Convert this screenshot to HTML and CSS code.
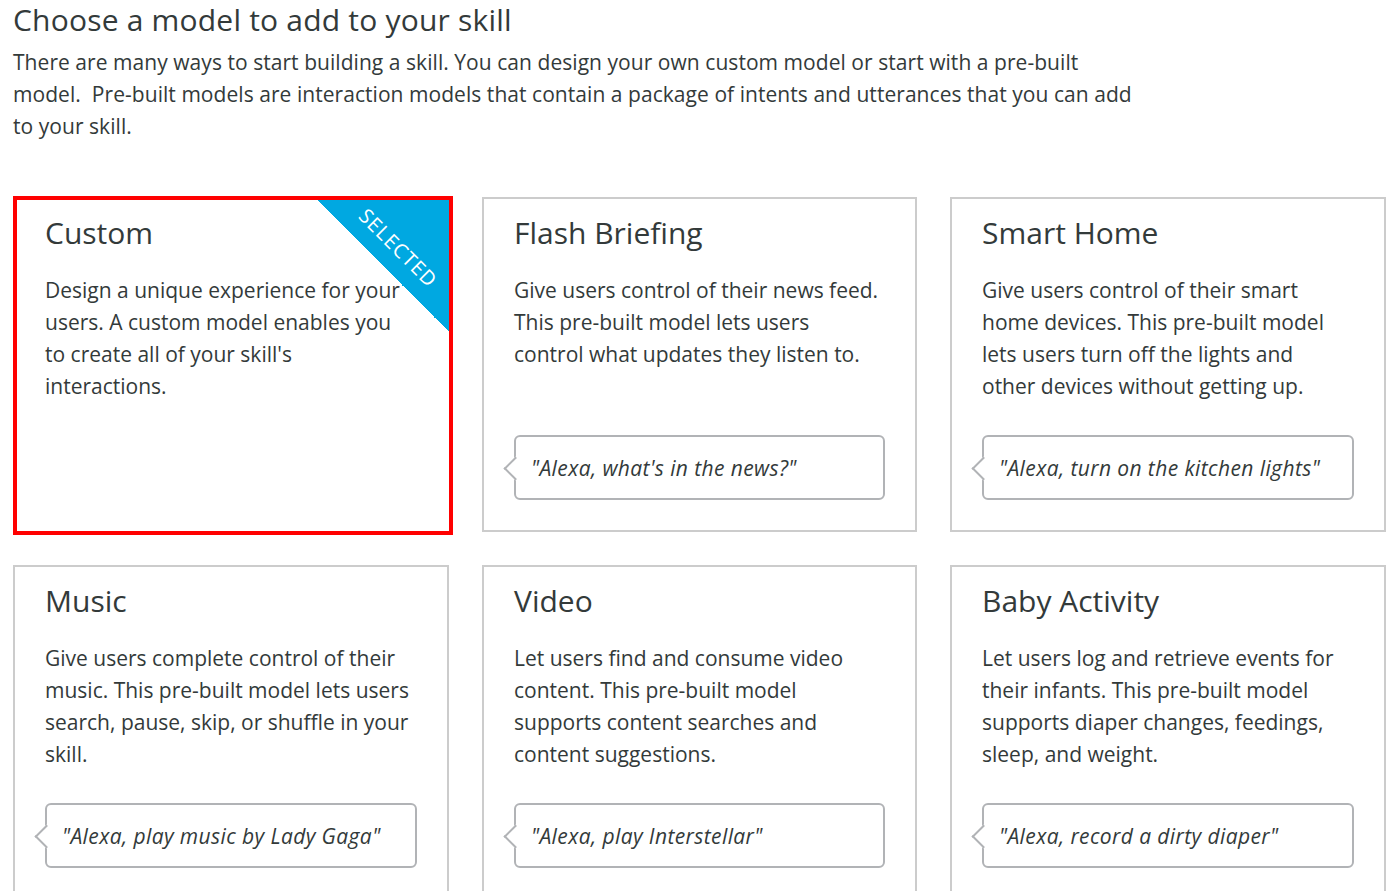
FILE: index.html
```html
<!DOCTYPE html>
<html lang="en">
<head>
<meta charset="utf-8">
<title>Choose a model</title>
<link rel="stylesheet" href="styles.css">
</head>
<body>
<div class="page">
  <h1 class="heading">Choose a model to add to your skill</h1>
  <p class="intro">There are many ways to start building a skill. You can design your own custom model or start with a pre-built<br>model.&nbsp; Pre-built models are interaction models that contain a package of intents and utterances that you can add to your skill.</p>

  <div class="grid">
    <div class="card card-selected">
      <div class="ribbon"><span class="ribbon-text">SELECTED</span></div>
      <h2 class="card-title">Custom</h2>
      <p class="card-desc">Design a unique experience for your users. A custom model enables you to create all of your skill's interactions.</p>
    </div>

    <div class="card">
      <h2 class="card-title">Flash Briefing</h2>
      <p class="card-desc">Give users control of their news feed. This pre-built model lets users control what updates they listen to.</p>
      <div class="bubble"><span class="bubble-text">"Alexa, what's in the news?"</span></div>
    </div>

    <div class="card">
      <h2 class="card-title">Smart Home</h2>
      <p class="card-desc">Give users control of their smart home devices. This pre-built model lets users turn off the lights and other devices without getting up.</p>
      <div class="bubble"><span class="bubble-text">"Alexa, turn on the kitchen lights"</span></div>
    </div>

    <div class="card">
      <h2 class="card-title">Music</h2>
      <p class="card-desc">Give users complete control of their music. This pre-built model lets users search, pause, skip, or shuffle in your skill.</p>
      <div class="bubble"><span class="bubble-text">"Alexa, play music by Lady Gaga"</span></div>
    </div>

    <div class="card">
      <h2 class="card-title">Video</h2>
      <p class="card-desc">Let users find and consume video content. This pre-built model supports content searches and content suggestions.</p>
      <div class="bubble"><span class="bubble-text">"Alexa, play Interstellar"</span></div>
    </div>

    <div class="card">
      <h2 class="card-title">Baby Activity</h2>
      <p class="card-desc">Let users log and retrieve events for their infants. This pre-built model supports diaper changes, feedings, sleep, and weight.</p>
      <div class="bubble"><span class="bubble-text">"Alexa, record a dirty diaper"</span></div>
    </div>
  </div>
</div>
</body>
</html>
```
FILE: styles.css
```css
html, body {
  margin: 0;
  padding: 0;
  background: #ffffff;
}

body {
  font-family: "Open Sans", "Noto Sans", "Liberation Sans", sans-serif;
  color: #333a3a;
  overflow: hidden;
}

.page {
  padding: 0 13px;
}

.heading {
  margin: 0;
  font-size: 30px;
  font-weight: 400;
  line-height: 40px;
  letter-spacing: 0.2px;
}

.intro {
  margin: 6px 0 0;
  max-width: 1140px;
  font-size: 21px;
  line-height: 32px;
  letter-spacing: 0.05px;
}

.grid {
  margin-top: 55px;
  display: grid;
  grid-template-columns: 436px 435px 436px;
  grid-auto-rows: 335px;
  column-gap: 33px;
  row-gap: 33px;
}

.card {
  position: relative;
  display: flex;
  flex-direction: column;
  border: 2px solid #cccccc;
  padding: 16px 33px 30px 30px;
  background: #ffffff;
}

.card-selected {
  border: 4px solid #ff0000;
  margin: -1px -4px -3px 0;
  padding: 15px 36px 30px 28px;
}

.card-title {
  margin: 0;
  font-size: 30px;
  font-weight: 400;
  line-height: 36px;
}

.card-desc {
  margin: 23px 0 0;
  font-size: 21px;
  line-height: 32px;
}

.ribbon {
  position: absolute;
  top: 0;
  right: 0;
  width: 132px;
  height: 132px;
  background: linear-gradient(to bottom left, #00a8e1 50%, rgba(0, 168, 225, 0) 50%);
  overflow: hidden;
}

.ribbon-text {
  position: absolute;
  left: 81px;
  top: 48px;
  transform: translate(-50%, -50%) rotate(45deg);
  color: #ffffff;
  font-size: 20px;
  line-height: 22px;
  letter-spacing: 1px;
  white-space: nowrap;
}

.bubble {
  position: relative;
  margin-top: auto;
  margin-right: -3px;
  height: 65px;
  box-sizing: border-box;
  border: 2px solid #b1b3b6;
  border-radius: 6px;
  padding: 0 15px;
  display: flex;
  align-items: center;
  background: #ffffff;
}

.bubble::before {
  content: "";
  position: absolute;
  left: -9px;
  top: 50%;
  width: 15px;
  height: 15px;
  margin-top: -8px;
  background: #ffffff;
  border-left: 2px solid #b1b3b6;
  border-bottom: 2px solid #b1b3b6;
  transform: rotate(45deg);
}

.bubble-text {
  position: relative;
  font-style: italic;
  font-size: 21px;
  line-height: 32px;
  letter-spacing: 0.4px;
}
```
